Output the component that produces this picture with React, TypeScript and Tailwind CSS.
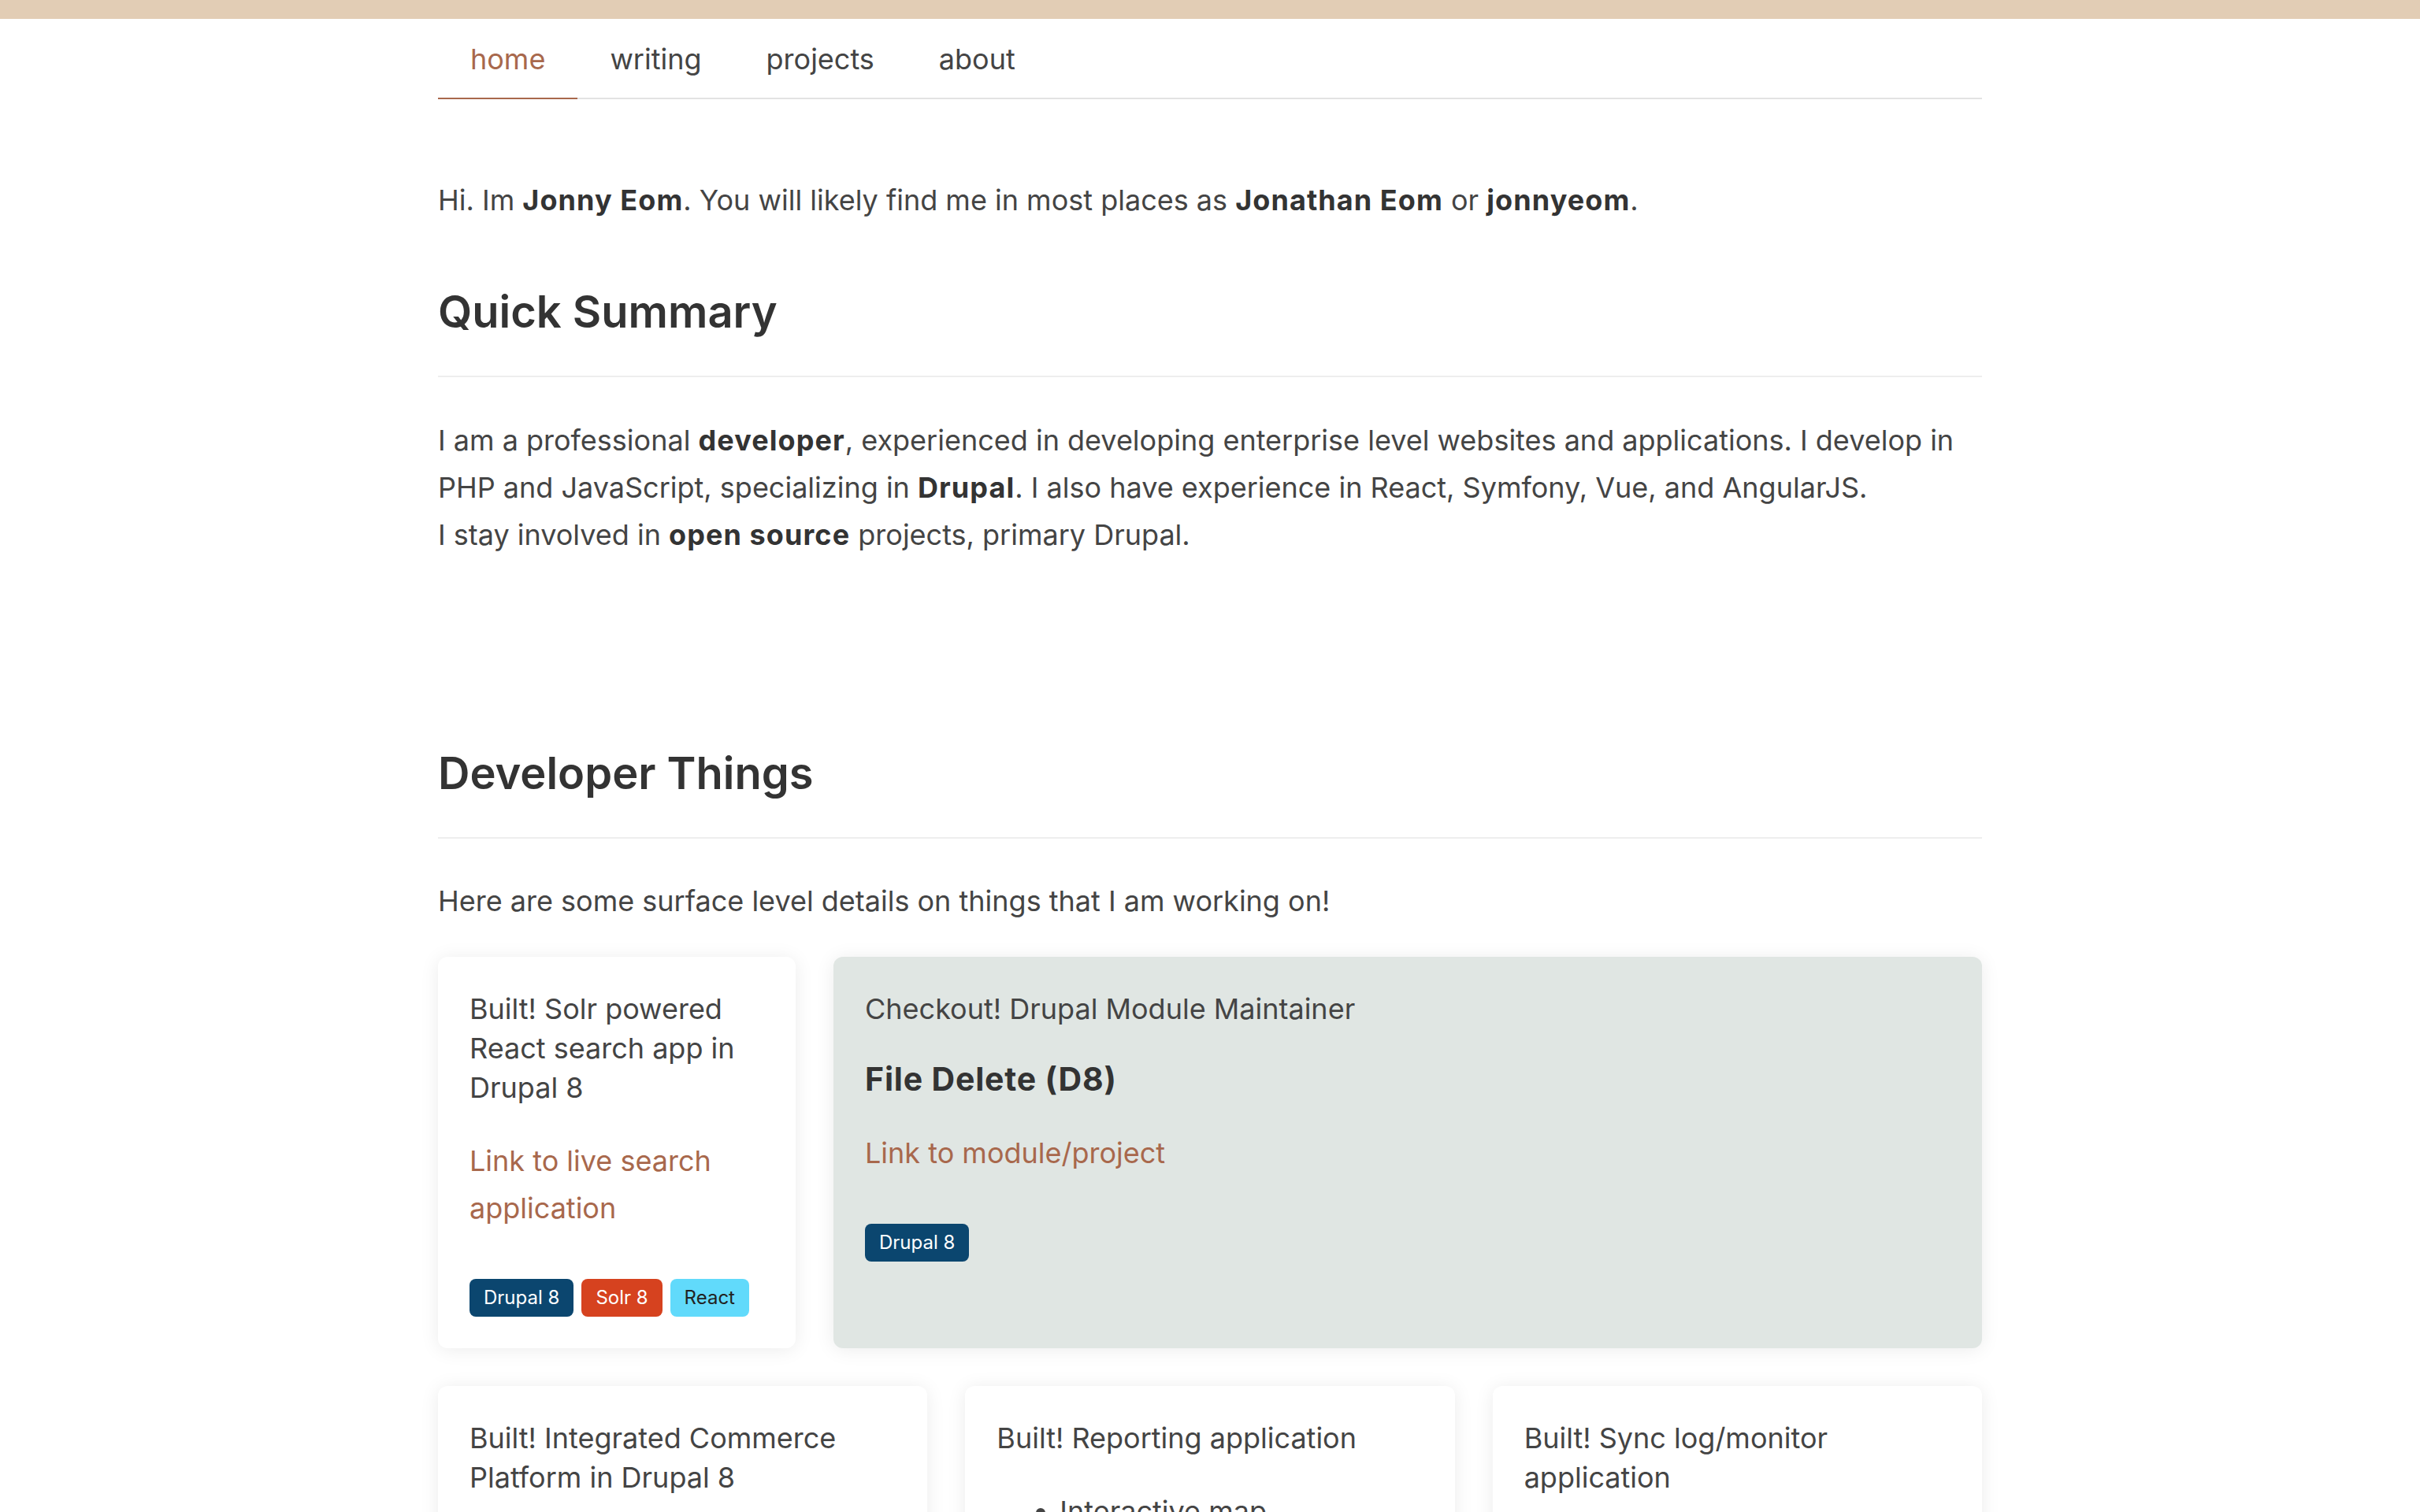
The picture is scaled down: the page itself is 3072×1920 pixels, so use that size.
const tabs = ["home", "writing", "projects", "about"];

const badgeStyles: Record<string, string> = {
  "Drupal 8": "bg-[#0b466f] text-white",
  "Solr 8": "bg-[#d6421f] text-white",
  React: "bg-[#61dafb] text-[#222]",
};

const Badge = ({ label }: { label: string }) => (
  <span
    className={`flex h-12 items-center rounded-lg px-[18px] text-[24px] ${badgeStyles[label]}`}
  >
    {label}
  </span>
);

const Strong = ({ children }: { children: React.ReactNode }) => (
  <b className="font-bold tracking-[0.03em] text-[#333]">{children}</b>
);

const Card = ({
  className = "bg-white",
  children,
}: {
  className?: string;
  children: React.ReactNode;
}) => (
  <div
    className={`rounded-xl px-10 pb-10 pt-[41px] shadow-[0_2px_24px_rgba(0,0,0,0.08)] ${className}`}
  >
    {children}
  </div>
);

export default function App() {
  return (
    <div className="min-h-screen bg-white font-['Inter',sans-serif] text-[#444]">
      <div className="h-6 bg-[#e2cdb5]" />

      <div className="mx-auto w-[1960px]">
        <nav className="flex border-b-2 border-[#e3e3e3] pt-6">
          {tabs.map((t) => (
            <a
              key={t}
              className={`-mb-[2px] border-b-2 px-[41px] pb-[22px] text-[36px] leading-[54px] ${
                t === "home"
                  ? "border-[#a8684c] text-[#a8684c]"
                  : "border-transparent text-[#444]"
              }`}
            >
              {t}
            </a>
          ))}
        </nav>

        <p className="mt-[98px] text-[36px] leading-[60px]">
          Hi. Im <Strong>Jonny Eom</Strong>. You will likely find me in most
          places as <Strong>Jonathan Eom</Strong> or <Strong>jonnyeom</Strong>.
        </p>

        <h2 className="mt-[77px] border-b-2 border-[#eee] pb-[46px] text-[56px] font-semibold leading-[70px] text-[#333]">
          Quick Summary
        </h2>

        <p className="mt-[50px] text-[36px] leading-[60px]">
          I am a professional <Strong>developer</Strong>, experienced in
          developing enterprise level websites and applications. I develop in
          PHP and JavaScript, specializing in <Strong>Drupal</Strong>. I also
          have experience in React, Symfony, Vue, and AngularJS.
          <br />I stay involved in <Strong>open source</Strong> projects,
          primary Drupal.
        </p>

        <h2 className="mt-[238px] border-b-2 border-[#eee] pb-[46px] text-[56px] font-semibold leading-[70px] text-[#333]">
          Developer Things
        </h2>

        <p className="mt-[49px] text-[36px] leading-[60px]">
          Here are some surface level details on things that I am working on!
        </p>

        <div className="mt-[41px] grid grid-cols-4 gap-12">
          <Card>
            <p className="text-[36px] leading-[50px]">
              Built! Solr powered React search app in Drupal 8
            </p>
            <a className="mt-[38px] block text-[36px] leading-[60px] text-[#a8684c]">
              Link to live search application
            </a>
            <div className="mt-[60px] flex gap-[10px]">
              <Badge label="Drupal 8" />
              <Badge label="Solr 8" />
              <Badge label="React" />
            </div>
          </Card>

          <Card className="col-span-3 bg-[#e0e6e3]">
            <p className="text-[36px] leading-[50px]">
              Checkout! Drupal Module Maintainer
            </p>
            <h3 className="mt-10 text-[41px] font-bold leading-[48px] tracking-[0.02em] text-[#333]">
              File Delete (D8)
            </h3>
            <a className="mt-10 block text-[36px] leading-[60px] text-[#a8684c]">
              Link to module/project
            </a>
            <div className="mt-[60px] flex gap-[10px]">
              <Badge label="Drupal 8" />
            </div>
          </Card>
        </div>

        <div className="mt-12 grid grid-cols-3 gap-12 pb-12">
          <Card>
            <p className="text-[36px] leading-[50px]">
              Built! Integrated Commerce Platform in Drupal 8
            </p>
            <ul className="mt-[38px] list-disc pl-20 text-[36px] leading-[60px]">
              <li>Custom payment flows</li>
              <li>Product catalog sync</li>
            </ul>
          </Card>

          <Card>
            <p className="text-[36px] leading-[50px]">
              Built! Reporting application
            </p>
            <ul className="mt-[38px] list-disc pl-20 text-[36px] leading-[60px]">
              <li>Interactive map</li>
              <li>Charts and exports</li>
            </ul>
          </Card>

          <Card>
            <p className="text-[36px] leading-[50px]">
              Built! Sync log/monitor application
            </p>
            <ul className="mt-[38px] list-disc pl-20 text-[36px] leading-[60px]">
              <li>Live status feed</li>
              <li>Error alerts</li>
            </ul>
          </Card>
        </div>
      </div>
    </div>
  );
}
